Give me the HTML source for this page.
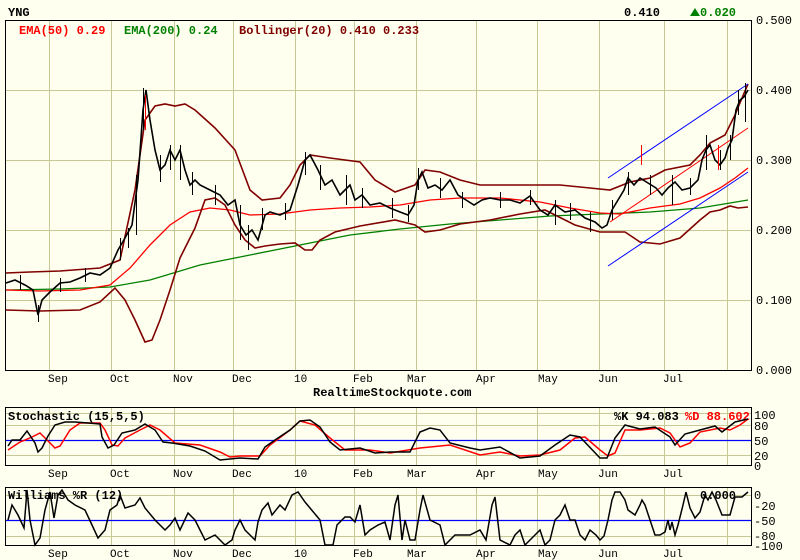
<!DOCTYPE html>
<html><head><meta charset="utf-8"><style>
html,body{margin:0;padding:0;background:#fffff0;}
svg{display:block;font-family:"Liberation Mono","DejaVu Sans Mono",monospace;font-weight:bold;}
</style></head><body>
<svg width="800" height="560" viewBox="0 0 800 560" xmlns="http://www.w3.org/2000/svg">
<rect width="800" height="560" fill="#fffff0"/>
<text x="8" y="16" font-size="12" fill="#000">YNG</text>
<text x="624" y="16" font-size="12" fill="#000">0.410</text>
<polygon points="690,16 695,8 700,16" fill="#008000"/>
<text x="700" y="16" font-size="12" fill="#008000">0.020</text>

<g stroke="#c8c896" stroke-width="1">
<path d="M49.5 20V370M111.5 20V370M174.5 20V370M233.5 20V370M295.5 20V370M354.5 20V370M416.5 20V370M476.5 20V370M537.5 20V370M599.5 20V370M664.5 20V370M727.5 20V370"/>
<path d="M5 90.5H751M5 160.5H751M5 230.5H751M5 300.5H751"/>
</g>
<text x="19" y="34" font-size="12" fill="#ff0000">EMA(50) 0.29</text>
<text x="124" y="34" font-size="12" fill="#008000">EMA(200) 0.24</text>
<text x="239" y="34" font-size="12" fill="#800000">Bollinger(20) 0.410 0.233</text>

<polyline fill="none" stroke="#008000" stroke-width="1.3" points="6,290 60,289 110,287 150,280 200,265 250,255 300,245 350,235 400,229 450,224 500,220 550,216 600,214 650,212 700,208 748,200"/>
<polyline fill="none" stroke="#ff0000" stroke-width="1.3" points="6,290 40,291 80,290 110,285 130,268 150,245 170,225 190,212 210,208 230,210 250,215 280,214 310,210 340,208 370,207 400,205 430,200 460,198 500,198 540,202 570,208 600,213 620,214 650,208 680,204 700,198 720,188 735,178 748,168"/>
<polyline fill="none" stroke="#800000" stroke-width="1.6" points="6,273 30,272 60,271 100,268 120,260 135,190 145,120 155,106 165,104 175,106 185,104 195,110 215,128 235,150 250,190 262,200 280,198 290,185 300,165 310,155 330,158 360,162 375,180 395,192 415,185 425,170 440,172 460,180 480,185 520,185 560,185 590,188 610,190 630,182 650,178 665,170 690,165 700,155 710,143 725,135 735,115 742,98 748,84"/>
<polyline fill="none" stroke="#800000" stroke-width="1.6" points="6,310 40,311 80,310 100,302 115,288 125,300 135,320 145,342 152,340 160,320 170,290 180,258 195,228 205,200 215,198 225,205 235,225 245,240 255,248 265,246 280,244 295,243 305,250 312,250 320,240 335,232 360,226 395,220 415,225 425,232 440,230 460,224 490,220 520,214 545,210 575,225 600,232 625,232 640,242 660,244 680,238 700,220 710,212 720,210 730,206 738,208 748,207"/>
<line x1="608" y1="178" x2="748" y2="84" stroke="#0000ff" stroke-width="1"/>
<line x1="608" y1="266" x2="748" y2="172" stroke="#0000ff" stroke-width="1"/>
<line x1="610" y1="222" x2="748" y2="128" stroke="#ff0000" stroke-width="1"/>
<polyline fill="none" stroke="#000" stroke-width="1.6" points="6,283 15,280 25,285 33,290 38,315 42,300 50,292 60,283 70,282 80,278 90,273 100,275 110,268 118,250 125,238 132,225 138,180 143,110 146,90 150,120 155,150 160,170 165,165 170,150 175,160 180,150 185,170 190,185 195,180 200,185 210,190 220,195 228,205 235,200 240,225 246,235 252,230 258,240 265,215 270,212 280,215 290,210 298,185 305,160 310,155 318,170 325,185 332,180 340,195 345,190 350,185 355,200 362,195 370,205 380,203 390,208 400,212 408,215 414,205 418,180 422,172 428,188 435,185 442,190 450,180 458,195 466,200 474,205 482,200 490,198 500,200 510,200 520,203 530,196 540,210 548,215 555,205 565,212 575,210 585,218 595,222 602,228 607,225 612,210 618,200 624,190 628,178 634,185 640,178 648,183 656,188 662,195 668,188 675,182 682,190 690,188 698,180 702,160 706,150 710,145 715,160 720,165 725,158 728,148 732,140 736,110 740,100 744,97 748,90"/>
<g stroke="#000" stroke-width="1">
<path d="M143.5 88V130M38.5 305V322M305.5 152V175M418.5 168V190M628.5 172V195M706.5 135V170M738.5 90V115M745.5 83V122M720.5 150V170M136.5 175V235M180.5 145V180M240.5 205V240M248.5 225V250M346.5 175V205M555.5 200V225M672.5 175V205
M20.5 275V290M60.5 278V292M85.5 268V282M120.5 238V260M128.5 228V248M160.5 155V182M170.5 145V170M192.5 172V195M215.5 185V205M262.5 208V230M285.5 203V220M320.5 165V190M362.5 188V208M392.5 198V218M408.5 205V222M440.5 178V198M462.5 192V208M500.5 192V208M530.5 190V205M570.5 203V220M590.5 212V232M612.5 200V220M650.5 175V195M690.5 178V195M730.5 135V160"/>
</g>
<path d="M641.5 145V165M718.5 145V170M145.5 95V130" stroke="#ff0000" stroke-width="1"/>

<rect x="5.5" y="20.5" width="746" height="350" fill="none" stroke="#000" stroke-width="1"/>
<g font-size="12" font-weight="normal" fill="#000">
<text x="756" y="24">0.500</text><text x="756" y="94">0.400</text><text x="756" y="164">0.300</text><text x="756" y="234">0.200</text><text x="756" y="304">0.100</text><text x="756" y="374">0.000</text>
</g>
<g font-size="11" font-weight="normal" fill="#000">
<text x="48" y="382">Sep</text><text x="110" y="382">Oct</text><text x="173" y="382">Nov</text><text x="232" y="382">Dec</text><text x="294" y="382">10</text><text x="353" y="382">Feb</text><text x="407" y="382">Mar</text><text x="476" y="382">Apr</text><text x="538" y="382">May</text><text x="598" y="382">Jun</text><text x="663" y="382">Jul</text>
</g>
<text x="313" y="396" font-size="12" fill="#000">RealtimeStockquote.com</text>

<g stroke="#c8c896" stroke-width="1">
<path d="M49.5 407V465M111.5 407V465M174.5 407V465M233.5 407V465M295.5 407V465M354.5 407V465M416.5 407V465M476.5 407V465M537.5 407V465M599.5 407V465M664.5 407V465M727.5 407V465"/>
<path d="M5 413.5H751M5 425.5H751M5 455.5H751"/>
</g>
<line x1="5" y1="440.5" x2="751" y2="440.5" stroke="#0000ff" stroke-width="1.2"/>
<text x="8" y="420" font-size="12" fill="#000">Stochastic (15,5,5)</text>
<text x="614" y="420" font-size="12" fill="#000">%K 94.083</text>
<text x="685" y="420" font-size="12" fill="#ff0000">%D 88.602</text>
<polyline fill="none" stroke="#ff0000" stroke-width="1.5" points="8,450 20,442 30,438 40,433 50,443 55,448 60,446 70,430 80,423 100,423 105,430 112,445 118,446 125,438 140,430 150,425 160,430 175,443 200,445 220,452 230,457 240,456 260,456 270,445 290,430 300,421 315,425 330,438 345,450 370,450 390,453 420,448 450,445 480,455 500,452 520,456 540,455 560,450 575,438 585,437 600,450 608,456 615,453 625,430 640,430 660,428 670,433 680,447 690,443 700,432 720,428 730,430 740,425 748,419"/>
<polyline fill="none" stroke="#000" stroke-width="1.5" points="8,446 12,440 20,440 27,431 35,443 38,452 42,448 48,436 55,425 65,422 75,422 88,423 100,424 102,437 108,448 114,445 122,433 135,430 145,424 155,430 163,442 172,443 190,446 205,451 220,460 240,458 258,459 265,447 275,440 290,430 300,421 310,420 320,427 330,442 340,450 360,448 375,453 390,452 410,452 420,432 430,428 440,430 450,443 470,448 480,450 500,447 520,458 540,456 555,445 570,435 580,437 600,458 607,458 615,438 625,425 640,429 655,427 670,437 675,445 685,434 700,430 715,426 722,432 735,422 748,419"/>
<rect x="5.5" y="407.5" width="746" height="58" fill="none" stroke="#000" stroke-width="1"/>
<g font-size="12" font-weight="normal" fill="#000">
<text x="754" y="419">100</text><text x="754" y="430">80</text><text x="754" y="445">50</text><text x="754" y="460">20</text><text x="754" y="470">0</text>
</g>
<g font-size="11" font-weight="normal" fill="#000">
<text x="48" y="477">Sep</text><text x="110" y="477">Oct</text><text x="173" y="477">Nov</text><text x="232" y="477">Dec</text><text x="294" y="477">10</text><text x="353" y="477">Feb</text><text x="407" y="477">Mar</text><text x="476" y="477">Apr</text><text x="538" y="477">May</text><text x="598" y="477">Jun</text><text x="663" y="477">Jul</text>
</g>

<g stroke="#c8c896" stroke-width="1">
<path d="M49.5 487V545M111.5 487V545M174.5 487V545M233.5 487V545M295.5 487V545M354.5 487V545M416.5 487V545M476.5 487V545M537.5 487V545M599.5 487V545M664.5 487V545M727.5 487V545"/>
<path d="M5 495.5H751M5 536.5H751"/>
</g>
<line x1="5" y1="520.5" x2="751" y2="520.5" stroke="#0000ff" stroke-width="1.2"/>
<text x="8" y="499" font-size="12" fill="#000">Williams %R (12)</text>
<text x="700" y="499" font-size="12" fill="#000">0.000</text>
<polyline fill="none" stroke="#000" stroke-width="1.5" points="8,520 12,505 18,515 24,528 27,490 30,520 35,545 40,538 45,510 50,492 54,518 58,495 62,490 68,500 75,505 85,510 92,525 98,538 105,530 110,510 117,505 120,495 125,508 135,505 140,498 145,508 155,520 165,530 170,525 175,518 180,530 188,513 195,520 205,540 215,535 225,545 232,540 235,530 240,520 245,530 255,540 258,522 262,510 268,503 272,515 280,505 285,510 292,495 298,492 305,502 310,508 320,520 325,545 333,545 337,525 345,517 350,517 355,522 360,505 365,535 370,530 378,525 385,522 390,540 395,505 398,495 402,540 405,520 410,540 415,540 420,510 423,495 430,520 440,525 445,545 455,535 470,535 480,530 486,540 492,505 495,497 500,540 510,545 515,535 520,530 525,545 530,540 540,530 545,545 550,540 555,520 560,515 565,505 570,520 575,520 580,535 585,540 590,530 596,535 600,540 604,536 608,520 612,500 615,492 620,492 625,500 628,510 635,515 640,505 642,500 645,505 650,520 655,535 660,535 665,532 668,520 670,530 672,522 675,535 678,525 683,505 686,492 690,508 695,518 700,512 705,495 708,500 712,492 716,500 718,505 722,515 730,515 735,497 742,497 748,492"/>
<rect x="5.5" y="487.5" width="746" height="58" fill="none" stroke="#000" stroke-width="1"/>
<g font-size="12" font-weight="normal" fill="#000">
<text x="754" y="499">0</text><text x="754" y="510">-20</text><text x="754" y="525">-50</text><text x="754" y="540">-80</text><text x="754" y="550">-100</text>
</g>
<g font-size="11" font-weight="normal" fill="#000">
<text x="48" y="557">Sep</text><text x="110" y="557">Oct</text><text x="173" y="557">Nov</text><text x="232" y="557">Dec</text><text x="294" y="557">10</text><text x="353" y="557">Feb</text><text x="407" y="557">Mar</text><text x="476" y="557">Apr</text><text x="538" y="557">May</text><text x="598" y="557">Jun</text><text x="663" y="557">Jul</text>
</g>
</svg>
</body></html>
